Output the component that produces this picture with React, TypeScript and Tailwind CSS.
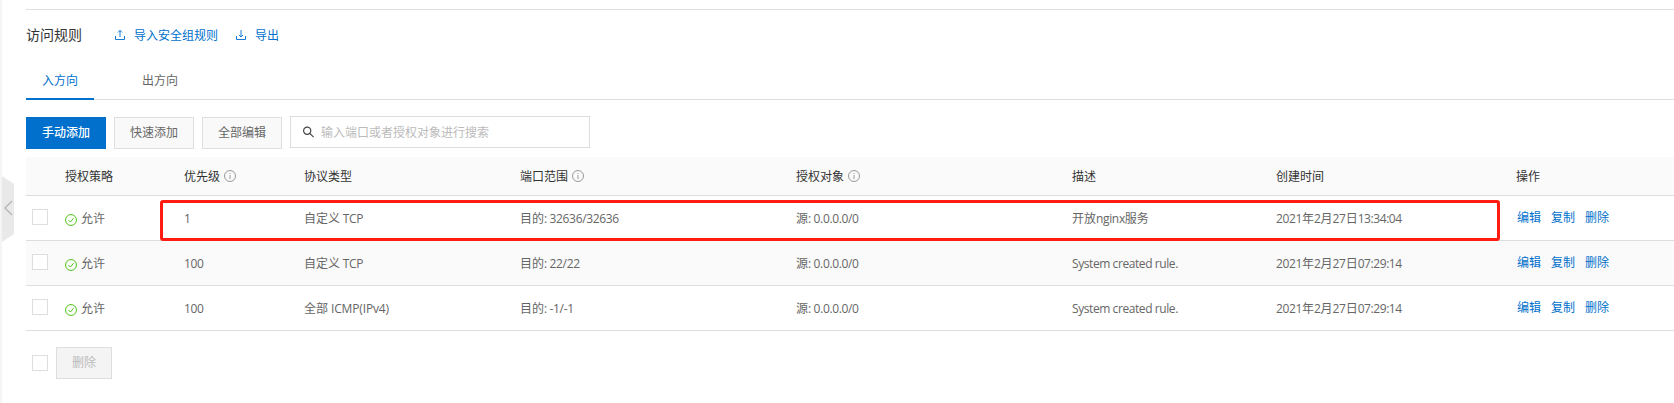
import React from "react";

const COLS =
  "grid grid-cols-[39px_119px_120px_216px_276px_276px_204px_240px_1fr] items-center";

function InfoIcon() {
  return (
    <svg width="12" height="12" viewBox="0 0 12 12" fill="none" stroke="#999" className="-mt-0.5 ml-1 block shrink-0">
      <circle cx="6" cy="6" r="5.5" />
      <path d="M6 5v4M6 3v1" />
    </svg>
  );
}

function CheckIcon() {
  return (
    <svg width="12" height="12" viewBox="0 0 12 12" fill="none" stroke="#52c41a" className="mt-px mr-1 block shrink-0">
      <circle cx="6" cy="6" r="5.45" />
      <path d="M3.4 6l2 2 3.2-3.8" />
    </svg>
  );
}

function TransferIcon({ down = false }: { down?: boolean }) {
  return (
    <svg width="12" height="12" viewBox="0 0 12 12" fill="none" stroke="#1a7bd4" className="-mt-0.5 block shrink-0">
      <path d="M1.5 7v3.5h9V7" />
      {down ? <path d="M6 1v7M4 6l2 2 2-2" /> : <path d="M6 8V1.4M4 3.4l2-2 2 2" />}
    </svg>
  );
}

function Checkbox() {
  return <span className="block h-4 w-4 shrink-0 border border-[#dedede] bg-white" />;
}

function trackingFor(part: string) {
  if (/ICMP/.test(part)) return "tracking-[-0.15px]";
  return /:\d/.test(part) || /[a-z] /.test(part) ? "tracking-[-0.42px]" : "tracking-[-0.35px]";
}

function Mixed({ text }: { text: string }) {
  return (
    <>
      {text.split(/([\x20-\x7e]+)/).map((part, i) =>
        /^[\x20-\x7e]+$/.test(part) ? (
          <span key={i} className={trackingFor(part)}>
            {part}
          </span>
        ) : (
          part
        ),
      )}
    </>
  );
}

const HEADERS = [
  { label: "授权策略" },
  { label: "优先级", info: true },
  { label: "协议类型" },
  { label: "端口范围", info: true },
  { label: "授权对象", info: true },
  { label: "描述" },
  { label: "创建时间" },
  { label: "操作" },
];

const ROWS = [
  ["1", "自定义 TCP", "目的: 32636/32636", "源: 0.0.0.0/0", "开放nginx服务", "2021年2月27日13:34:04"],
  ["100", "自定义 TCP", "目的: 22/22", "源: 0.0.0.0/0", "System created rule.", "2021年2月27日07:29:14"],
  ["100", "全部 ICMP(IPv4)", "目的: -1/-1", "源: 0.0.0.0/0", "System created rule.", "2021年2月27日07:29:14"],
];

export default function App() {
  return (
    <div className="relative flex h-[403px] w-[1674px] overflow-hidden bg-white font-['Open_Sans','Noto_Sans_CJK_SC',sans-serif] text-xs leading-[18px] text-[#666]">
      <div className="w-0.5 shrink-0 bg-[#f5f5f5]" />
      <svg width="12" height="68" viewBox="0 0 12 68" className="absolute top-[175px] left-0.5">
        <path d="M0 1l12 8v50L0 67z" fill="#e9e9e9" />
        <path d="M10 26l-7 7 7 7" fill="none" stroke="#b5b5b5" strokeWidth="1.4" />
      </svg>

      <main className="ml-6 flex min-w-0 flex-1 flex-col pt-[9px]">
        <div className="h-px shrink-0 bg-[#dedede]" />
        <header className="flex h-[50px] items-center text-[#0070cc]">
          <h1 className="w-[88px] text-sm leading-[18px] text-[#333]">访问规则</h1>
          <a className="flex items-center gap-2 pt-0.5">
            <TransferIcon />
            导入安全组规则
          </a>
          <a className="ml-[17px] flex items-center gap-2 pt-0.5">
            <TransferIcon down />
            导出
          </a>
        </header>

        <nav className="flex h-10 border-b border-[#dedede]">
          <a className="-mb-px flex h-10 w-[68px] items-center justify-center border-b-2 border-[#0070cc] pt-[3px] text-[#0070cc]">
            入方向
          </a>
          <a className="ml-8 flex h-[39px] w-[68px] items-center justify-center pt-0.5">出方向</a>
        </nav>

        <div className="flex items-start gap-2 pt-4">
          <button className="mt-px h-8 w-20 bg-[#0070cc] font-medium text-white">手动添加</button>
          <button className="mt-px h-8 w-20 border border-[#dedede] bg-[#f9f9f9]">快速添加</button>
          <button className="mt-px h-8 w-20 border border-[#dedede] bg-[#f9f9f9]">全部编辑</button>
          <label className="flex h-8 w-[300px] items-center gap-[7px] border border-[#dedede] bg-white pl-3 text-[#bbb]">
            <svg width="11" height="12" viewBox="0 0 11 12" fill="none" stroke="#444" strokeWidth="1.2">
              <circle cx="4.2" cy="4.7" r="3.6" />
              <path d="M6.8 7.3l3.8 3.8" />
            </svg>
            <span className="pt-0.5">输入端口或者授权对象进行搜索</span>
          </label>
        </div>

        <section className="mt-2">
          <div className={`${COLS} h-[39px] border-b border-[#dedede] bg-[#fafafa] pt-0.5 text-[#333]`}>
            <span />
            {HEADERS.map((h) => (
              <span key={h.label} className="flex items-center">
                {h.label}
                {h.info && <InfoIcon />}
              </span>
            ))}
          </div>
          {ROWS.map((row, i) => (
            <div
              key={i}
              className={`${COLS} h-[45px] border-b border-[#dedede] pt-0.5 ${i === 1 ? "bg-[#fafafa]" : ""}`}
            >
              <span className="-mt-1 ml-1.5">
                <Checkbox />
              </span>
              <span className="flex items-center">
                <CheckIcon />
                允许
              </span>
              {row.map((text, j) => (
                <span key={j} className="whitespace-pre">
                  <Mixed text={text} />
                </span>
              ))}
              <span className="-mt-0.5 flex gap-2.5 pl-px text-[#0070cc]">
                <a>编辑</a>
                <a>复制</a>
                <a>删除</a>
              </span>
            </div>
          ))}
        </section>

        <footer className="flex items-center gap-2 pt-4 pl-1.5">
          <Checkbox />
          <button className="h-8 w-14 border border-[#dedede] bg-[#f4f4f4] text-[#bbb]">删除</button>
        </footer>
      </main>

      <div className="absolute top-[200px] left-[160px] h-[41px] w-[1340px] rounded-[3px] border-3 border-[#ff1d12]" />
    </div>
  );
}
